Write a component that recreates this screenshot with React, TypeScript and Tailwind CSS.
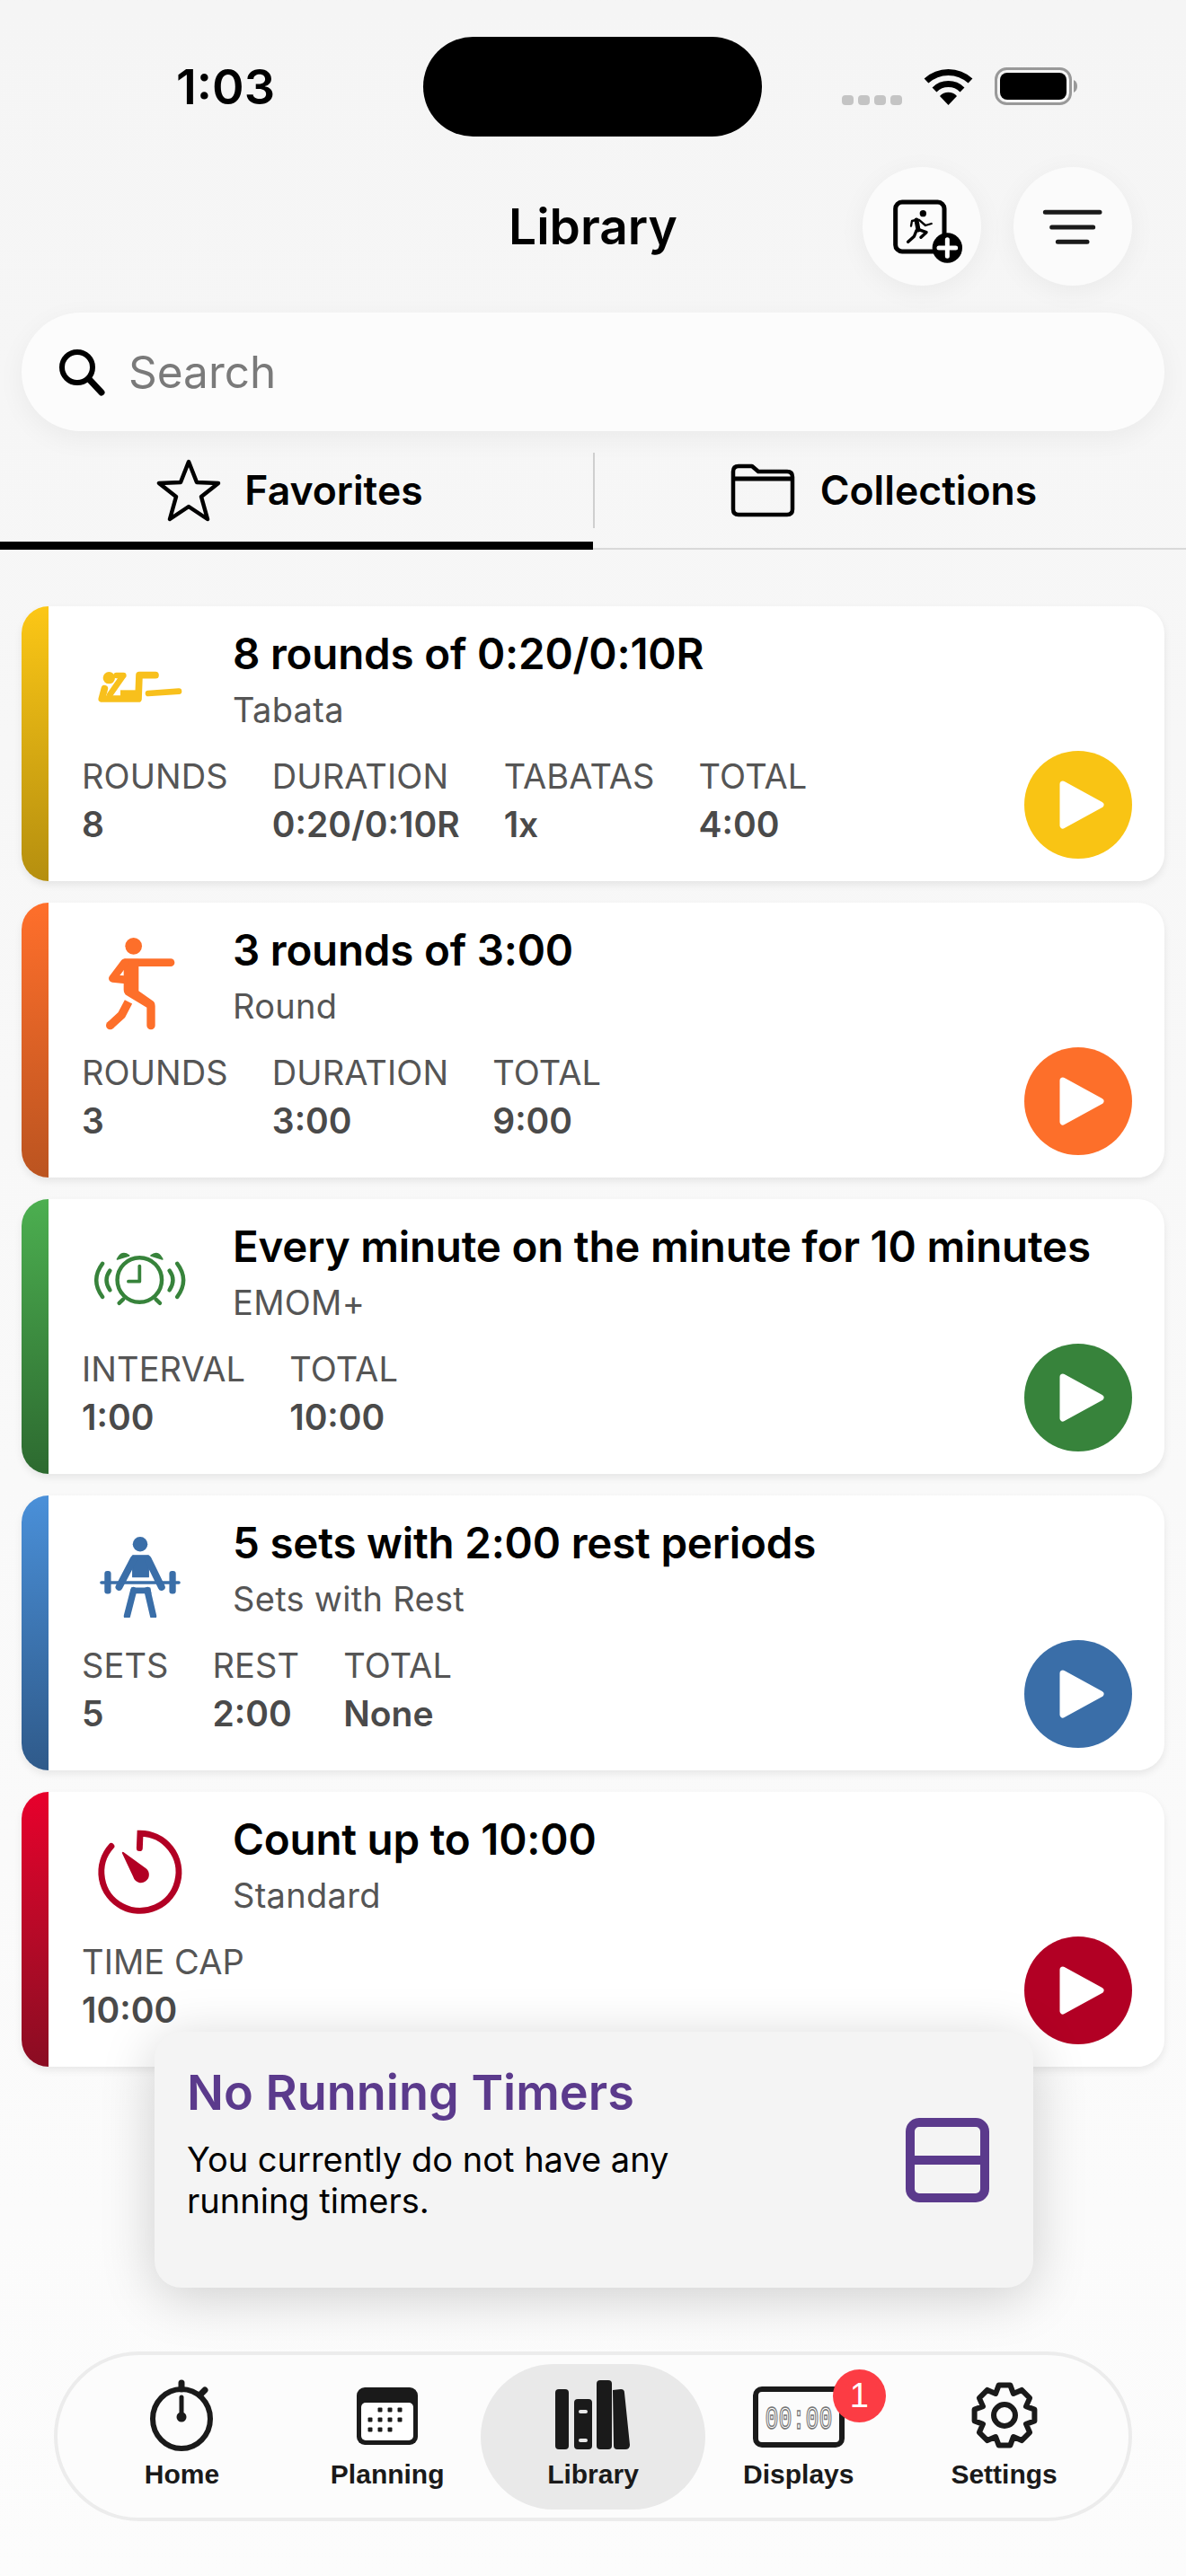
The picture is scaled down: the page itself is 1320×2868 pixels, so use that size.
import React from 'react';

type Stat = { label: string; value: string };
type Timer = {
  title: string;
  kind: string;
  bar: string;
  play: string;
  icon: React.ReactNode;
  stats: Stat[];
};

// gear outline with eight teeth, used by the Settings tab
const gearPath = (() => {
  const points: string[] = [];
  for (let i = 0; i < 8; i++) {
    const a = (i * Math.PI) / 4 - Math.PI / 2;
    const step = Math.PI / 4;
    const pts: [number, number][] = [
      [26, a - step * 0.5],
      [34, a - step * 0.24],
      [34, a + step * 0.24],
      [26, a + step * 0.5],
    ];
    pts.forEach(([r, t]) => points.push(`${(40 + r * Math.cos(t)).toFixed(1)} ${(40 + r * Math.sin(t)).toFixed(1)}`));
  }
  return 'M' + points.join(' L') + ' Z';
})();

const TabataIcon = () => (
  <svg width="95" height="37" viewBox="150 203 285 111" fill="none" stroke="#f8c01c" strokeWidth="23" strokeLinecap="round" strokeLinejoin="round">
    <circle cx="187" cy="226" r="20" fill="#f8c01c" stroke="none" />
    <path d="M172 262 L163 296 L285 296 L288 217 L342 217" />
    <path d="M235 218 L212 218 M232 222 L190 282" strokeWidth="20" />
    <path d="M225 283 L292 283" strokeWidth="32" strokeLinecap="butt" />
    <path d="M318 278 L420 271" strokeWidth="20" />
  </svg>
);

const RoundIcon = () => (
  <svg width="84" height="110" viewBox="135 60 250 330" fill="none" stroke="#fd6f2a" strokeLinecap="round" strokeLinejoin="round">
    <circle cx="238" cy="100" r="28" fill="#fd6f2a" stroke="none" />
    <path d="M215 155 L362 155" strokeWidth="26" />
    <path d="M205 143 L255 143 L255 250 L305 285 Q310 290 310 300 L310 365 A14 14 0 0 1 282 365 L282 305 L215 265 Q205 258 205 245 Z" fill="#fd6f2a" stroke="none" />
    <path d="M208 155 L168 208 L205 212" strokeWidth="26" />
    <path d="M221 286 L198 330 L160 365" strokeWidth="28" strokeLinecap="butt" />
    <circle cx="160" cy="365" r="14" fill="#fd6f2a" stroke="none" />
  </svg>
);

const EmomIcon = () => (
  <svg width="110" height="70" viewBox="100 125 320 200" fill="none" stroke="#37833b" strokeWidth="13" strokeLinecap="round" strokeLinejoin="round">
    <circle cx="258" cy="225" r="72" />
    <path d="M258 180 L258 230 L222 230" strokeWidth="11" />
    <path d="M186 158 Q200 128 224 146 Z M295 146 Q318 128 332 158 Z" fill="#37833b" strokeWidth="5" />
    <path d="M205 288 L192 300 M311 288 L324 300" />
    <path d="M162 195 Q140 225 162 258 M138 172 Q98 225 138 280 M355 195 Q377 225 355 258 M380 172 Q420 225 380 280" />
  </svg>
);

const SetsIcon = () => (
  <svg width="90" height="92" viewBox="122 50 272 276" fill="none" stroke="#3a6ea8" strokeLinecap="round" strokeLinejoin="round">
    <circle cx="258" cy="80" r="25" fill="#3a6ea8" stroke="none" />
    <path d="M233 118 L286 118 L286 190 L233 190 Z" fill="#3a6ea8" stroke="#3a6ea8" strokeWidth="4" />
    <path d="M236 130 L187 224 M284 130 L330 224" strokeWidth="24" />
    <path d="M128 209 L388 209" strokeWidth="11" />
    <rect x="138" y="170" width="22" height="77" rx="9" fill="#3a6ea8" stroke="none" />
    <rect x="356" y="170" width="22" height="77" rx="9" fill="#3a6ea8" stroke="none" />
    <path d="M228 226 L292 226 L296 246 L224 246 Z" fill="#3a6ea8" stroke="none" />
    <path d="M236 235 L214 321 M282 235 L302 321" strokeWidth="22" />
  </svg>
);

const TimeCapIcon = () => (
  <svg width="96" height="96" viewBox="325 170 290 290" fill="none" stroke="#b20024" strokeWidth="21" strokeLinecap="round">
    <path d="M373 226 A130 130 0 1 0 470 183 L468 232" />
    <path d="M412 248 L488 303 A24 24 0 1 1 450 329 Z" fill="#b20024" stroke="#b20024" strokeWidth="6" strokeLinejoin="round" />
  </svg>
);

const timers: Timer[] = [
  {
    title: '8 rounds of 0:20/0:10R',
    kind: 'Tabata',
    bar: 'bg-gradient-to-b from-[#fcc716] to-[#b58f0f]',
    play: 'bg-[#f9c414]',
    icon: <TabataIcon />,
    stats: [
      { label: 'ROUNDS', value: '8' },
      { label: 'DURATION', value: '0:20/0:10R' },
      { label: 'TABATAS', value: '1x' },
      { label: 'TOTAL', value: '4:00' },
    ],
  },
  {
    title: '3 rounds of 3:00',
    kind: 'Round',
    bar: 'bg-gradient-to-b from-[#ff6f2b] to-[#bb5420]',
    play: 'bg-[#fd6f2a]',
    icon: <RoundIcon />,
    stats: [
      { label: 'ROUNDS', value: '3' },
      { label: 'DURATION', value: '3:00' },
      { label: 'TOTAL', value: '9:00' },
    ],
  },
  {
    title: 'Every minute on the minute for 10 minutes',
    kind: 'EMOM+',
    bar: 'bg-gradient-to-b from-[#4caf50] to-[#2d6a30]',
    play: 'bg-[#37833b]',
    icon: <EmomIcon />,
    stats: [
      { label: 'INTERVAL', value: '1:00' },
      { label: 'TOTAL', value: '10:00' },
    ],
  },
  {
    title: '5 sets with 2:00 rest periods',
    kind: 'Sets with Rest',
    bar: 'bg-gradient-to-b from-[#4a90d9] to-[#2f5a8a]',
    play: 'bg-[#3a6ea8]',
    icon: <SetsIcon />,
    stats: [
      { label: 'SETS', value: '5' },
      { label: 'REST', value: '2:00' },
      { label: 'TOTAL', value: 'None' },
    ],
  },
  {
    title: 'Count up to 10:00',
    kind: 'Standard',
    bar: 'bg-gradient-to-b from-[#e8002c] to-[#8a0c22]',
    play: 'bg-[#b20024]',
    icon: <TimeCapIcon />,
    stats: [{ label: 'TIME CAP', value: '10:00' }],
  },
];

const TimerCard = ({ timer }: { timer: Timer }) => (
  <div className="flex h-[306px] overflow-hidden rounded-[30px] bg-white shadow-[0_4px_8px_rgba(0,0,0,0.08)]">
    <div className={`w-[30px] shrink-0 ${timer.bar}`} />
    <div className="flex flex-1 flex-col pt-[23px] pl-[37px] pr-[36px]">
      <div className="flex h-[134px] items-start">
        <div className="flex h-[134px] w-[130px] shrink-0 items-center justify-center">{timer.icon}</div>
        <div className="ml-[38px]">
          <div className="text-[47.5px] leading-[60px] font-semibold tracking-[-0.2px] whitespace-nowrap text-black">{timer.title}</div>
          <div className="mt-[7px] text-[38px] leading-[50px] tracking-[0.3px] text-[#555]">{timer.kind}</div>
        </div>
      </div>
      <div className="mt-[4px] flex h-[120px] items-center justify-between">
        <div className="mb-[10px] flex gap-[49px]">
          {timer.stats.map((s) => (
            <div key={s.label}>
              <div className="text-[38px] leading-[46px] tracking-[0.1px] whitespace-nowrap text-[#555]">{s.label}</div>
              <div className="mt-[7px] text-[39px] leading-[48px] font-semibold whitespace-nowrap text-[#4a4a4a]">{s.value}</div>
            </div>
          ))}
        </div>
        <div className={`flex h-[120px] w-[120px] items-center justify-center rounded-full pl-[8px] ${timer.play}`}>
          <svg width="50" height="58" viewBox="0 0 50 58">
            <path d="M4 6 L46 29 L4 52 Z" fill="#fff" stroke="#fff" strokeWidth="7" strokeLinejoin="round" />
          </svg>
        </div>
      </div>
    </div>
  </div>
);

const navItems = [
  {
    label: 'Home',
    icon: (
      <svg width="80" height="80" viewBox="0 0 80 80" fill="none" stroke="#1a1a1a" strokeLinecap="round">
        <ellipse cx="40" cy="44" rx="32" ry="33" strokeWidth="6" />
        <path d="M40 4 L40 11" strokeWidth="7" />
        <path d="M61 17 L66 12" strokeWidth="7" />
        <path d="M40 20 L40 42" strokeWidth="5" />
        <circle cx="40" cy="42" r="5.5" fill="#1a1a1a" stroke="none" />
      </svg>
    ),
  },
  {
    label: 'Planning',
    icon: (
      <svg width="80" height="80" viewBox="0 0 80 80">
        <rect x="6" y="9" width="68" height="64" rx="9" fill="#1a1a1a" />
        <rect x="11" y="26" width="58" height="42" rx="5" fill="#fff" />
        {[[32, 34], [43, 34], [54, 34], [21, 45], [32, 45], [43, 45], [54, 45], [21, 56], [32, 56], [43, 56]].map(([x, y]) => (
          <rect key={`${x}-${y}`} x={x - 2.5} y={y - 2.5} width="5" height="5" rx="1" fill="#1a1a1a" />
        ))}
      </svg>
    ),
  },
  {
    label: 'Library',
    active: true,
    icon: (
      <svg width="84" height="80" viewBox="0 0 84 80" fill="#1a1a1a">
        <rect x="0" y="11" width="15" height="67" rx="4" />
        <rect x="21" y="22" width="20" height="56" rx="4" />
        <rect x="26" y="34" width="10" height="4" rx="2" fill="#e9e9e9" />
        <rect x="26" y="66" width="10" height="4" rx="2" fill="#e9e9e9" />
        <rect x="46" y="1" width="17" height="77" rx="4" />
        <path d="M64 12 L73 11 Q77 11 77 15 L83 73 Q83 78 78 78 L69 78 Q65 78 65 74 Z" />
      </svg>
    ),
  },
  {
    label: 'Displays',
    badge: '1',
    icon: (
      <svg width="104" height="80" viewBox="0 0 104 80" fill="none">
        <rect x="4" y="11" width="96" height="62" rx="7" stroke="#1a1a1a" strokeWidth="6" />
        <g transform="scale(1 1.5)">
          <text x="52" y="36.5" textAnchor="middle" fontFamily="Liberation Mono, monospace" fontSize="25" fill="#fff" stroke="#777" strokeWidth="1">00:00</text>
        </g>
      </svg>
    ),
  },
  {
    label: 'Settings',
    icon: (
      <svg width="80" height="80" viewBox="0 0 80 80" fill="none" stroke="#1a1a1a" strokeWidth="6" strokeLinejoin="round">
        <path d={gearPath} />
        <circle cx="40" cy="40" r="12" />
      </svg>
    ),
  },
];

export default function App() {
  return (
    <div className="h-[2868px] w-[1320px] overflow-hidden bg-gradient-to-b from-[#f5f5f5] to-[#fcfcfc] [font-family:Inter,sans-serif]">
      {/* Status bar */}
      <div className="flex h-[186px] pt-[41px]">
        <div className="flex h-[111px] w-[471px] items-center pl-[196px] text-[54px] font-semibold text-black">1:03</div>
        <div className="h-[111px] w-[377px] rounded-full bg-black" />
        <div className="ml-[89px] flex h-[111px] items-start gap-[23px] pt-[34px]">
          <div className="mt-[31px] flex gap-[5px]">
            {[0, 1, 2, 3].map((i) => (
              <div key={i} className="h-[11px] w-[13px] rounded-[4px] bg-[#c4c4c4]" />
            ))}
          </div>
          <svg width="57" height="42" viewBox="0 0 57 42" fill="none" stroke="#000">
            <path d="M4 15 A36 36 0 0 1 53 15" strokeWidth="7" />
            <path d="M13 25 A22 22 0 0 1 44 25" strokeWidth="7" />
            <path d="M28.5 42 L19 32 A13 13 0 0 1 38 32 Z" fill="#000" stroke="none" />
          </svg>
          <svg width="92" height="42" viewBox="0 0 92 42" fill="none">
            <rect x="1.5" y="1.5" width="83" height="39" rx="12" stroke="#999" strokeWidth="3" />
            <rect x="6" y="6" width="74" height="30" rx="8" fill="#000" />
            <path d="M88 14 Q92 16 92 21 Q92 26 88 28 Z" fill="#999" />
          </svg>
        </div>
      </div>

      {/* Header */}
      <div className="grid h-[132px] grid-cols-[1fr_auto_1fr] items-center pr-[60px]">
        <div />
        <h1 className="pl-[60px] text-[55px] font-semibold text-black">Library</h1>
        <div className="flex justify-end gap-[36px]">
          <button className="flex h-[132px] w-[132px] items-center justify-center rounded-full bg-[#fbfbfb] shadow-[0_6px_30px_rgba(0,0,0,0.05)]">
            <svg width="132" height="132" viewBox="60 48 396 396" fill="none" stroke="#000" strokeLinecap="round" strokeLinejoin="round">
              <rect x="170" y="165" width="163" height="165" rx="22" strokeWidth="15" />
              <circle cx="262" cy="203" r="11" fill="#000" stroke="none" />
              <path d="M240 225 L246 258" strokeWidth="15" />
              <path d="M248 224 L270 243 L290 237 M238 225 L225 228 L222 245" strokeWidth="7" />
              <path d="M246 256 L273 266 L255 283 M240 260 L232 280 L212 298" strokeWidth="10" />
              <circle cx="343" cy="318" r="50" fill="#000" stroke="none" />
              <path d="M343 290 L343 346 M315 318 L371 318" stroke="#fff" strokeWidth="15" />
            </svg>
          </button>
          <button className="flex h-[132px] w-[132px] items-center justify-center rounded-full bg-[#fbfbfb] shadow-[0_6px_30px_rgba(0,0,0,0.05)]">
            <svg width="132" height="132" viewBox="564 48 396 396" fill="none" stroke="#1a1a1a" strokeWidth="15" strokeLinecap="round">
              <path d="M670 199 L852 199 M692 249 L830 249 M712 298 L810 298" />
            </svg>
          </button>
        </div>
      </div>

      {/* Search */}
      <div className="mx-[24px] mt-[30px] flex h-[132px] items-center rounded-full bg-[#fcfcfc] pl-[40px] shadow-[0_8px_30px_rgba(0,0,0,0.05)]">
        <svg width="54" height="54" viewBox="0 0 54 54" fill="none" stroke="#000" strokeWidth="6" strokeLinecap="round">
          <circle cx="22" cy="22" r="17" />
          <path d="M35 35 L49 50" strokeWidth="7" />
        </svg>
        <span className="ml-[25px] text-[49.5px] text-[#7a7a7a]">Search</span>
      </div>

      {/* Tabs */}
      <div className="flex h-[132px] border-b-2 border-[#d9d9d9] text-[44.5px] font-semibold text-black">
        <div className="flex h-[132px] w-[660px] items-center justify-center gap-[26px] border-b-[9px] border-black pt-[9px] pr-[15px]">
          <svg width="72" height="70" viewBox="0 0 72 70" fill="none" stroke="#000" strokeWidth="4.5" strokeLinejoin="round">
            <path d="M36 3 L45 26 L69 27 L50 42 L57 67 L36 53 L15 67 L22 42 L3 27 L27 26 Z" />
          </svg>
          <span>Favorites</span>
        </div>
        <div className="mt-[24px] h-[84px] w-[2px] bg-[#cfcfcf]" />
        <div className="flex h-[132px] flex-1 items-center justify-center gap-[28px] pr-[15px]">
          <svg width="72" height="60" viewBox="0 0 72 60" fill="none" stroke="#000" strokeWidth="4.5" strokeLinejoin="round">
            <path d="M3 9 Q3 3 9 3 L24 3 L31 9 L63 9 Q69 9 69 15 L69 51 Q69 57 63 57 L9 57 Q3 57 3 51 Z" />
            <path d="M3 17 L69 17" strokeWidth="5" />
          </svg>
          <span>Collections</span>
        </div>
      </div>

      {/* Timers */}
      <div className="flex flex-col gap-[24px] px-[24px] pt-[63px]">
        {timers.map((t) => (
          <TimerCard key={t.title} timer={t} />
        ))}
      </div>

      {/* Running timers panel */}
      <div className="relative z-10 mt-[-39px] ml-[172px] flex h-[285px] w-[978px] items-center justify-between rounded-[30px] bg-[#f4f4f4] pr-[49px] pl-[36px] shadow-[0_10px_60px_rgba(0,0,0,0.18)]">
        <div className="self-start pt-[38px]">
          <div className="text-[54px] leading-[60px] font-semibold text-[#5b3a8c]">No Running Timers</div>
          <div className="mt-[21px] text-[38px] leading-[46px] text-black">
            You currently do not have any
            <br />
            running timers.
          </div>
        </div>
        <svg width="93" height="94" viewBox="0 0 93 94" fill="none" stroke="#5b3a8c" strokeWidth="10">
          <rect x="5" y="5" width="83" height="84" rx="10" />
          <path d="M5 47 L88 47" />
        </svg>
      </div>

      {/* Bottom tab bar */}
      <nav className="mx-[60px] mt-[71px] grid h-[189px] grid-cols-5 items-center rounded-full border-4 border-[#ececec] bg-[#fcfcfc] px-[24px] [font-family:'Liberation_Sans',sans-serif]">
        {navItems.map((item) => (
          <div
            key={item.label}
            className={`-mx-[11px] flex h-[162px] flex-col items-center rounded-full pt-[17px] ${item.active ? 'bg-[#e9e9e9]' : ''}`}
          >
            <div className="relative h-[80px]">
              {item.icon}
              {item.badge && (
                <div className="absolute -top-[11px] -right-[45px] flex h-[59px] w-[59px] items-center justify-center rounded-full bg-[#fc3c44] text-[38px] font-normal text-white">
                  {item.badge}
                </div>
              )}
            </div>
            <div className="mt-[8px] text-[30px] leading-[36px] font-bold text-[#1a1a1a]">{item.label}</div>
          </div>
        ))}
      </nav>
    </div>
  );
}
